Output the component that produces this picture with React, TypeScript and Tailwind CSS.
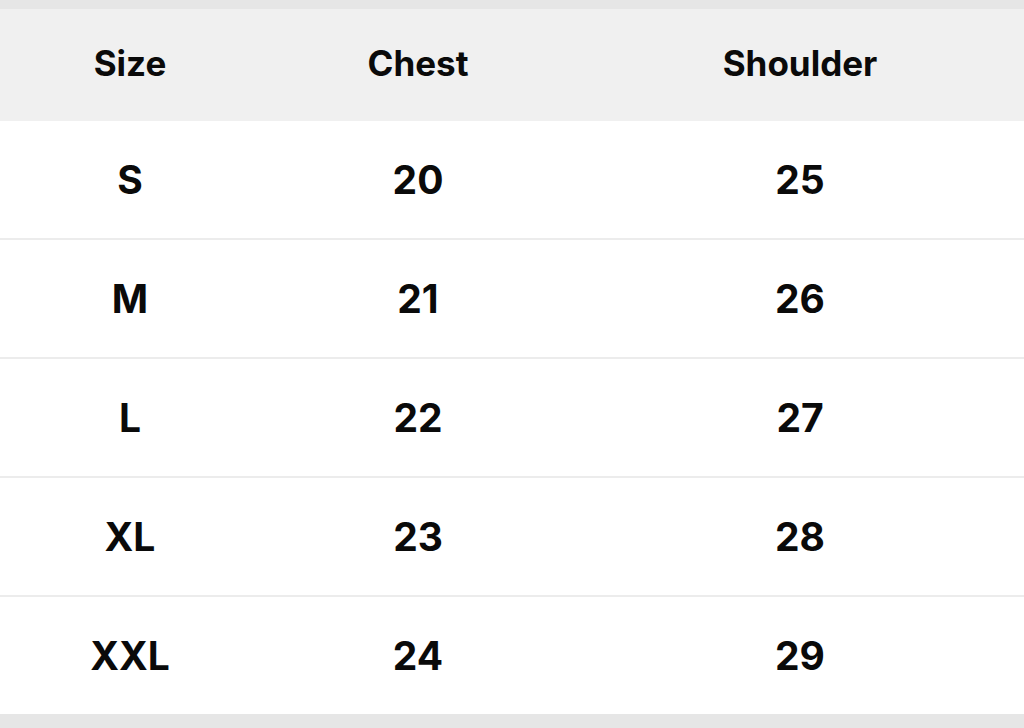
const HEADERS = ["Size", "Chest", "Shoulder"];

const ROWS = [
  ["S", "20", "25"],
  ["M", "21", "26"],
  ["L", "22", "27"],
  ["XL", "23", "28"],
  ["XXL", "24", "29"],
];

const COLS = "grid grid-cols-[260px_316px_448px]";

export default function App() {
  return (
    <div className="w-[1024px] h-[728px] overflow-hidden bg-[#e6e6e6] font-['Inter',sans-serif] text-[#0a0a0a]">
      <div className="h-[9px]" />
      <div className="bg-white">
        <div className={`${COLS} h-[112px] items-center bg-[#f0f0f0]`}>
          {HEADERS.map((h) => (
            <div key={h} className="text-center text-[35px] font-bold leading-none pb-[4px]">
              {h}
            </div>
          ))}
        </div>
        {ROWS.map((row, i) => (
          <div
            key={row[0]}
            className={`${COLS} items-center ${
              i < ROWS.length - 1 ? "h-[119px] border-b-2 border-[#ececec]" : "h-[117px]"
            }`}
          >
            {row.map((cell, j) => (
              <div key={j} className="text-center text-[39px] font-bold leading-none">
                {cell}
              </div>
            ))}
          </div>
        ))}
      </div>
    </div>
  );
}
